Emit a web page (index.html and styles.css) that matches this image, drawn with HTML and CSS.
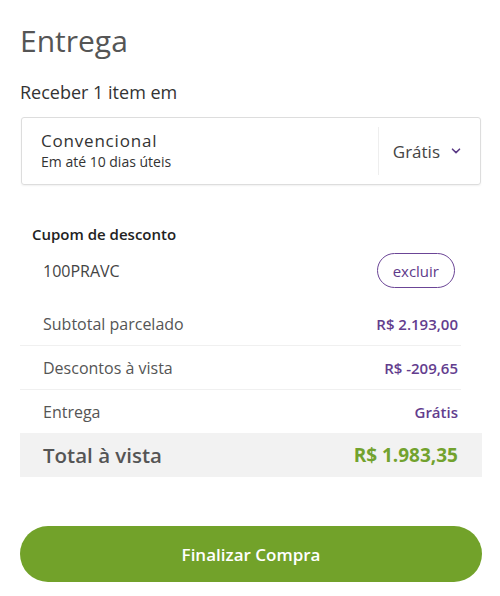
FILE: index.html
```
<!DOCTYPE html>
<html lang="pt-BR">
<head>
    <meta charset="UTF-8">
    <meta name="viewport" content="width=device-width, initial-scale=1.0">
    <title>Entrega</title>
    <link rel="stylesheet" href="styles.css">
</head>
<body>
    <div class="checkout">
        <h1 class="title">Entrega</h1>
        <p class="subtitle">Receber 1 item em</p>

        <div class="shipping-box">
            <div class="shipping-info">
                <div class="shipping-name">Convencional</div>
                <div class="shipping-time">Em até 10 dias úteis</div>
            </div>
            <div class="shipping-price">
                Grátis
                <svg class="chevron" width="10" height="6" viewBox="0 0 10 6">
                    <path d="M1.5 1.2 L5 4.6 L8.5 1.2" fill="none" stroke="#5b3a86" stroke-width="1.6" stroke-linecap="round" stroke-linejoin="round"/>
                </svg>
            </div>
        </div>

        <div class="summary">
            <h2 class="coupon-title">Cupom de desconto</h2>
            <div class="coupon-row">
                <span class="coupon-code">100PRAVC</span>
                <button class="btn-remove">excluir</button>
            </div>
            <div class="row">
                <span class="label">Subtotal parcelado</span>
                <span class="value">R$ 2.193,00</span>
            </div>
            <div class="row">
                <span class="label">Descontos à vista</span>
                <span class="value">R$ -209,65</span>
            </div>
            <div class="row no-border">
                <span class="label">Entrega</span>
                <span class="value">Grátis</span>
            </div>
            <div class="total">
                <span class="total-label">Total à vista</span>
                <span class="total-value">R$ 1.983,35</span>
            </div>
        </div>

        <button class="btn-finish">Finalizar Compra</button>
    </div>
</body>
</html>
```
FILE: styles.css
```
body {
    margin: 0;
    padding: 0;
    background-color: #fff;
    font-family: "Open Sans", sans-serif;
    color: #333;
}
.checkout {
    padding: 25px 18px 0 20px;
}
.title {
    font-size: 30px;
    font-weight: 400;
    color: #555;
    margin: 0;
    line-height: 32px;
}
.subtitle {
    font-size: 18px;
    color: #333;
    margin: 24px 0 0 0;
    line-height: 22px;
}
.shipping-box {
    display: flex;
    align-items: center;
    margin: 14px 1px 0 1px;
    height: 66px;
    border: 1px solid #ddd;
    border-radius: 3px;
    box-shadow: 0 1px 2px rgba(0, 0, 0, 0.06);
}
.shipping-info {
    flex: 1;
    padding-left: 19px;
}
.shipping-name {
    font-size: 17px;
    color: #333;
    letter-spacing: 0.8px;
    line-height: 20px;
}
.shipping-time {
    font-size: 14px;
    color: #333;
    line-height: 18px;
    margin-top: 2px;
}
.shipping-price {
    display: flex;
    align-items: center;
    gap: 11px;
    height: 48px;
    padding: 0 19px 0 14px;
    border-left: 1px solid #eee;
    font-size: 17px;
    color: #444;
}
.summary {
    margin-top: 39px;
}
.coupon-title {
    font-size: 15px;
    font-weight: 600;
    color: #222;
    margin: 0 0 0 12px;
    line-height: 20px;
}
.coupon-row {
    display: flex;
    align-items: center;
    justify-content: space-between;
    height: 53px;
    padding: 0 6px 5px 23px;
    margin-right: 21px;
}
.coupon-code {
    font-size: 16px;
    color: #444;
}
.btn-remove {
    font-family: "Open Sans", sans-serif;
    font-size: 15px;
    color: #5e3a8a;
    background: #fff;
    border: 1px solid #6b4596;
    border-radius: 18px;
    height: 35px;
    padding: 0 15px;
}
.row {
    display: flex;
    align-items: center;
    justify-content: space-between;
    height: 43px;
    padding: 0 3px 0 23px;
    margin-right: 21px;
    border-bottom: 1px solid #f0f0f0;
}
.row.no-border {
    border-bottom: none;
}
.label {
    font-size: 16px;
    color: #555;
}
.value {
    font-size: 15px;
    font-weight: 600;
    color: #633d8e;
}
.total {
    display: flex;
    align-items: center;
    justify-content: space-between;
    height: 44px;
    padding: 0 24px 0 23px;
    background-color: #f2f2f2;
}
.total-label {
    font-size: 20.5px;
    font-weight: 600;
    color: #555;
}
.total-value {
    font-size: 19px;
    font-weight: 700;
    color: #72a22e;
}
.btn-finish {
    display: block;
    width: 100%;
    height: 56px;
    margin-top: 49px;
    border: none;
    border-radius: 28px;
    background-color: #72a22a;
    color: #fff;
    font-family: "Open Sans", sans-serif;
    font-size: 17px;
    font-weight: 600;
    cursor: pointer;
}
```
